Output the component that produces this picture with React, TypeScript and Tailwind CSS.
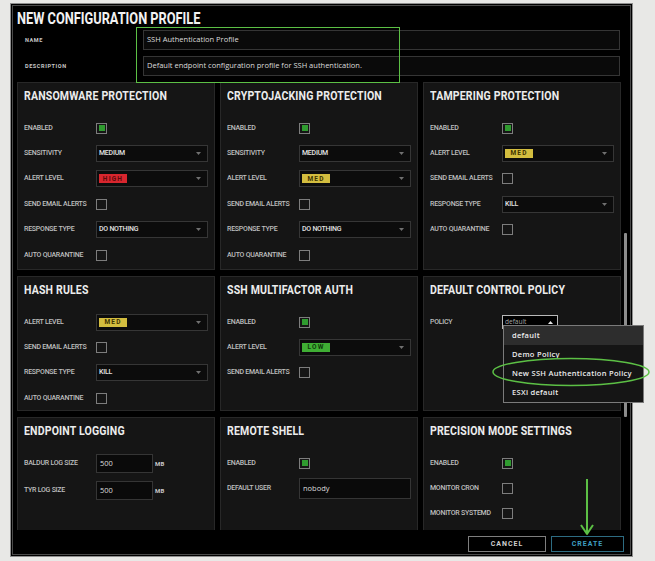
import type { ReactNode } from "react"

const HEAD = "font-['Roboto',sans-serif]"
const BODY = "font-['Open_Sans','Liberation_Sans',sans-serif]"

const BADGE: Record<string, string> = {
  HIGH: "bg-[#d8262e] text-[#5c0a0c]",
  MED: "bg-[#d3bd3f] text-[#3d3300]",
  LOW: "bg-[#3fae34] text-[#0f3a0b]",
}

function Caret({ up }: { up?: boolean }) {
  return (
    <svg width="5" height="3" viewBox="0 0 5 3" className="shrink-0">
      {up ? (
        <polygon points="0,3 5,3 2.5,0" fill="#e6e6e6" />
      ) : (
        <polygon points="0,0 5,0 2.5,3" fill="#707070" />
      )}
    </svg>
  )
}

function Check({ on }: { on?: boolean }) {
  return (
    <div className={`w-[11px] h-[11px] border border-[#7d7d7d] ${on ? "p-[1.5px]" : ""}`}>
      {on && <div className="w-full h-full bg-[#2f9b2f]" />}
    </div>
  )
}

function Select({ children }: { children: ReactNode }) {
  return (
    <div className="w-[112px] h-[17px] border border-[#363636] bg-[#0c0c0c] flex items-center justify-between pl-[2px] pr-[6px]">
      {children}
      <Caret />
    </div>
  )
}

function Value({ text }: { text: string }) {
  return <span className="text-[7px] font-medium tracking-[-0.25px] text-[#e2e2e2] leading-none">{text}</span>
}

function Badge({ level }: { level: string }) {
  return (
    <span className={`w-[28px] h-[9px] flex items-center justify-center text-[6.5px] font-bold tracking-[1.2px] leading-none ${BADGE[level]}`}>
      {level}
    </span>
  )
}

function TextInput({ value, w, h }: { value: string; w: string; h: string }) {
  return (
    <div className={`${w} ${h} border border-[#353535] bg-[#0a0a0a] flex items-center pl-[3px] ${BODY} text-[7.5px] text-[#dcdcdc]`}>
      {value}
    </div>
  )
}

function Row({ label, children, h = "h-[25.4px]" }: { label: string; children?: ReactNode; h?: string }) {
  return (
    <div className={`${h} flex items-center`}>
      <div className="w-[72px] shrink-0 text-[7px] font-medium tracking-[-0.25px] text-[#bfbfbf] leading-none whitespace-nowrap">
        {label}
      </div>
      {children}
    </div>
  )
}

function Panel({ title, children }: { title: string; children: ReactNode }) {
  return (
    <div className="bg-[#151515] border border-[#282828] pt-[4.5px] px-[6px]">
      <h2 className="h-[16px] leading-[16px] text-[12.7px] font-bold text-[#ececec]">
        <span className="inline-block origin-left scale-x-[0.83] whitespace-nowrap tracking-[0.2px]">{title}</span>
      </h2>
      <div className="mt-[12px]">{children}</div>
    </div>
  )
}

export default function App() {
  return (
    <div className={`relative w-[655px] h-[561px] bg-[#e8e8e6] pt-[3px] pl-[10px] overflow-hidden ${HEAD}`}>
      <div className="w-[623px] h-[554px] border border-[#8e8e8e] bg-black p-[1px]">
        <div className="h-full border border-[#4a4a4a] flex flex-col">
          <h1 className="h-[23px] pt-[3px] pl-[4px] leading-[20px] text-[16.4px] font-bold text-[#f2f2f2]">
            <span className="inline-block origin-left scale-x-[0.78] whitespace-nowrap">NEW CONFIGURATION PROFILE</span>
          </h1>

          <div className="mt-[1px] h-[20px] flex items-center pl-[12px]">
            <div className="w-[118px] text-[5.5px] font-bold tracking-[0.6px] text-[#c8c8c8]">NAME</div>
            <TextInput value="SSH Authentication Profile" w="w-[477px]" h="h-[20px]" />
          </div>
          <div className="mt-[6px] h-[20px] flex items-center pl-[12px]">
            <div className="w-[118px] text-[5.5px] font-bold tracking-[0.6px] text-[#c8c8c8]">DESCRIPTION</div>
            <TextInput
              value="Default endpoint configuration profile for SSH authentication."
              w="w-[477px]"
              h="h-[20px]"
            />
          </div>

          <div className="mt-[6px] h-[448px] flex overflow-hidden pl-[4px]">
            <div className="w-[604px] shrink-0 grid grid-cols-3 grid-rows-[188px_135px_135px] gap-x-[5px] gap-y-[6px]">
              <Panel title="RANSOMWARE PROTECTION">
                <Row label="ENABLED"><Check on /></Row>
                <Row label="SENSITIVITY"><Select><Value text="MEDIUM" /></Select></Row>
                <Row label="ALERT LEVEL"><Select><Badge level="HIGH" /></Select></Row>
                <Row label="SEND EMAIL ALERTS"><Check /></Row>
                <Row label="RESPONSE TYPE"><Select><Value text="DO NOTHING" /></Select></Row>
                <Row label="AUTO QUARANTINE"><Check /></Row>
              </Panel>
              <Panel title="CRYPTOJACKING PROTECTION">
                <Row label="ENABLED"><Check on /></Row>
                <Row label="SENSITIVITY"><Select><Value text="MEDIUM" /></Select></Row>
                <Row label="ALERT LEVEL"><Select><Badge level="MED" /></Select></Row>
                <Row label="SEND EMAIL ALERTS"><Check /></Row>
                <Row label="RESPONSE TYPE"><Select><Value text="DO NOTHING" /></Select></Row>
                <Row label="AUTO QUARANTINE"><Check /></Row>
              </Panel>
              <Panel title="TAMPERING PROTECTION">
                <Row label="ENABLED"><Check on /></Row>
                <Row label="ALERT LEVEL"><Select><Badge level="MED" /></Select></Row>
                <Row label="SEND EMAIL ALERTS"><Check /></Row>
                <Row label="RESPONSE TYPE"><Select><Value text="KILL" /></Select></Row>
                <Row label="AUTO QUARANTINE"><Check /></Row>
              </Panel>

              <Panel title="HASH RULES">
                <Row label="ALERT LEVEL"><Select><Badge level="MED" /></Select></Row>
                <Row label="SEND EMAIL ALERTS"><Check /></Row>
                <Row label="RESPONSE TYPE"><Select><Value text="KILL" /></Select></Row>
                <Row label="AUTO QUARANTINE"><Check /></Row>
              </Panel>
              <Panel title="SSH MULTIFACTOR AUTH">
                <Row label="ENABLED"><Check on /></Row>
                <Row label="ALERT LEVEL"><Select><Badge level="LOW" /></Select></Row>
                <Row label="SEND EMAIL ALERTS"><Check /></Row>
              </Panel>
              <Panel title="DEFAULT CONTROL POLICY">
                <Row label="POLICY">
                  <div className={`w-[56px] h-[14px] border border-[#b8b8b8] bg-black flex items-center justify-between pl-[2px] pr-[4px] ${BODY} text-[6.5px] text-[#a8a8a8]`}>
                    default
                    <Caret up />
                  </div>
                </Row>
              </Panel>

              <Panel title="ENDPOINT LOGGING">
                <Row label="BALDUR LOG SIZE" h="h-[26.5px]">
                  <TextInput value="500" w="w-[57px]" h="h-[19px]" />
                  <span className="ml-[2px] text-[6px] font-bold tracking-[0.3px] text-[#c8c8c8]">MB</span>
                </Row>
                <Row label="TYR LOG SIZE" h="h-[26.5px]">
                  <TextInput value="500" w="w-[57px]" h="h-[19px]" />
                  <span className="ml-[2px] text-[6px] font-bold tracking-[0.3px] text-[#c8c8c8]">MB</span>
                </Row>
              </Panel>
              <Panel title="REMOTE SHELL">
                <Row label="ENABLED"><Check on /></Row>
                <Row label="DEFAULT USER">
                  <TextInput value="nobody" w="w-[112px]" h="h-[21px]" />
                </Row>
              </Panel>
              <Panel title="PRECISION MODE SETTINGS">
                <Row label="ENABLED"><Check on /></Row>
                <Row label="MONITOR CRON"><Check /></Row>
                <Row label="MONITOR SYSTEMD"><Check /></Row>
              </Panel>
            </div>
            <div className="ml-[3px] mt-[151px] w-[3px] h-[184px] bg-[#8c8c8c] rounded-[1px]" />
          </div>

          <div className="h-[24px] flex justify-end items-start gap-[5px] pt-[6px] pr-[6px]">
            <button className="w-[78px] h-[16px] border border-[#7e7e7e] text-[7px] font-bold tracking-[1px] text-[#cfcfcf] leading-none">
              CANCEL
            </button>
            <button className="w-[73px] h-[16px] border border-[#2d6c82] text-[7px] font-bold tracking-[1px] text-[#3e9ec2] leading-none">
              CREATE
            </button>
          </div>
        </div>
      </div>

      {/* native select popup */}
      <div className={`absolute left-[503px] top-[325px] w-[141px] border border-[#7a7a7a] bg-[#151515] ${BODY} text-[7.5px] font-semibold tracking-[0.3px] text-[#ececec]`}>
        <div className="h-[19px] flex items-center pl-[8px] bg-[#2d2d2d]">default</div>
        <div className="h-[19px] flex items-center pl-[8px]">Demo Policy</div>
        <div className="h-[19px] flex items-center pl-[8px]">New SSH Authentication Policy</div>
        <div className="h-[19px] flex items-center pl-[8px]">ESXi default</div>
      </div>

      {/* annotations */}
      <div className="absolute left-[136px] top-[27px] w-[264px] h-[56px] border-[1.5px] border-[#5cc045]" />
      <svg className="absolute left-[490px] top-[355px]" width="162" height="34" viewBox="0 0 162 34">
        <ellipse cx="81" cy="17" rx="78" ry="13.5" fill="none" stroke="#5cc045" strokeWidth="1.5" />
      </svg>
      <svg className="absolute left-[578px] top-[476px]" width="18" height="62" viewBox="0 0 18 62">
        <line x1="9" y1="3" x2="9" y2="57" stroke="#5cc045" strokeWidth="2" />
        <polyline points="3,49 9,58 15,49" fill="none" stroke="#5cc045" strokeWidth="2" strokeLinejoin="round" />
      </svg>
    </div>
  )
}
